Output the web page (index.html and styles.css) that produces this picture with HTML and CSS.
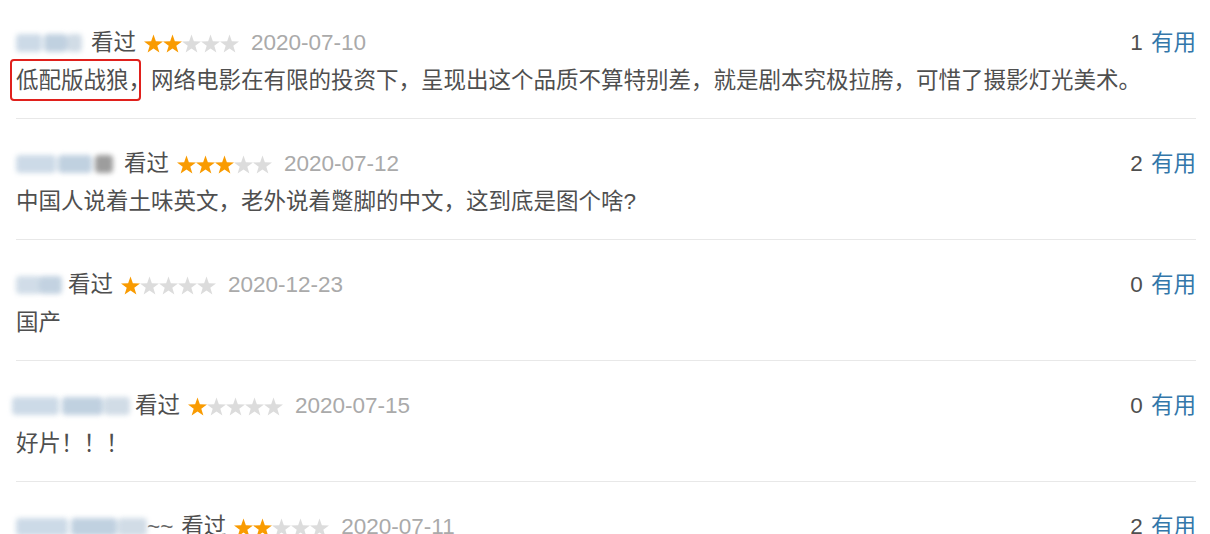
FILE: index.html
```html
<!DOCTYPE html>
<html lang="zh">
<head>
<meta charset="utf-8">
<title>短评</title>
<link rel="stylesheet" href="styles.css">
</head>
<body>
<svg width="0" height="0" class="defs">
  <defs>
    <polygon id="star" points="9.5,0.5 11.85,7.26 19,7.41 13.3,11.74 15.38,18.59 9.5,14.5 3.62,18.59 5.7,11.74 0,7.41 7.15,7.26"/>
  </defs>
</svg>
<div class="list">
  <div class="item">
    <div class="head">
      <span class="name w66"><i class="b1"></i><i class="b2"></i><i class="b3"></i></span>
      <span class="seen">看过</span>
      <svg class="stars" viewBox="0 0 95 19" width="95" height="19"><use href="#star" x="0" class="on"/><use href="#star" x="19" class="on"/><use href="#star" x="38"/><use href="#star" x="57"/><use href="#star" x="76"/></svg>
      <span class="date">2020-07-10</span>
      <span class="votes">1 <a class="useful">有用</a></span>
    </div>
    <p class="text"><span class="mark">低配版战狼，</span>网络电影在有限的投资下，呈现出这个品质不算特别差，就是剧本究极拉胯，可惜了摄影灯光美术。</p>
  </div>
  <div class="item">
    <div class="head">
      <span class="name w99"><i class="b1"></i><i class="b2"></i><i class="b4"></i></span>
      <span class="seen">看过</span>
      <svg class="stars" viewBox="0 0 95 19" width="95" height="19"><use href="#star" x="0" class="on"/><use href="#star" x="19" class="on"/><use href="#star" x="38" class="on"/><use href="#star" x="57"/><use href="#star" x="76"/></svg>
      <span class="date">2020-07-12</span>
      <span class="votes">2 <a class="useful">有用</a></span>
    </div>
    <p class="text">中国人说着土味英文，老外说着蹩脚的中文，这到底是图个啥?</p>
  </div>
  <div class="item">
    <div class="head">
      <span class="name w46"><i class="c1"></i><i class="c2"></i></span>
      <span class="seen">看过</span>
      <svg class="stars" viewBox="0 0 95 19" width="95" height="19"><use href="#star" x="0" class="on"/><use href="#star" x="19"/><use href="#star" x="38"/><use href="#star" x="57"/><use href="#star" x="76"/></svg>
      <span class="date">2020-12-23</span>
      <span class="votes">0 <a class="useful">有用</a></span>
    </div>
    <p class="text">国产</p>
  </div>
  <div class="item">
    <div class="head">
      <span class="name w118"><i class="b1"></i><i class="b2"></i><i class="b3"></i></span>
      <span class="seen tight">看过</span>
      <svg class="stars" viewBox="0 0 95 19" width="95" height="19"><use href="#star" x="0" class="on"/><use href="#star" x="19"/><use href="#star" x="38"/><use href="#star" x="57"/><use href="#star" x="76"/></svg>
      <span class="date">2020-07-15</span>
      <span class="votes">0 <a class="useful">有用</a></span>
    </div>
    <p class="text">好片！！！</p>
  </div>
  <div class="item">
    <div class="head">
      <span class="name w131"><i class="b1"></i><i class="b2"></i><i class="b3"></i></span><span class="tilde">~~</span>
      <span class="seen">看过</span>
      <svg class="stars" viewBox="0 0 95 19" width="95" height="19"><use href="#star" x="0" class="on"/><use href="#star" x="19" class="on"/><use href="#star" x="38"/><use href="#star" x="57"/><use href="#star" x="76"/></svg>
      <span class="date">2020-07-11</span>
      <span class="votes">2 <a class="useful">有用</a></span>
    </div>
    <p class="text">&nbsp;</p>
  </div>
</div>
</body>
</html>
```
FILE: styles.css
```css
html, body {
  margin: 0;
  padding: 0;
  background: #fff;
}
body {
  font-family: "Liberation Sans", "Noto Sans CJK SC", sans-serif;
  font-size: 22.5px;
  color: #4f4f4f;
  overflow: hidden;
}
.defs {
  position: absolute;
}
.list {
  padding: 0 14px 0 16px;
}
.item {
  padding: 27px 0 19px;
  border-bottom: 1px solid #e8e8e8;
}
.item:first-child {
  padding-top: 25px;
}
.head {
  display: flex;
  align-items: center;
  height: 36px;
  line-height: 36px;
}
.name {
  position: relative;
  display: inline-block;
  height: 22px;
  margin-right: 9px;
  filter: blur(2.5px);
  opacity: 0.85;
}
.name i {
  position: absolute;
  top: 2px;
  height: 18px;
  border-radius: 4px;
}
.name .b1 { left: 0; width: 40%; background: #c4d4e3; }
.name .b2 { left: 42%; width: 35%; background: #b6c9db; }
.name .b3 { left: 78%; width: 22%; background: #c9d6e2; }
.name .b4 { left: 80%; width: 18%; background: #8c8c8c; }
.name .c1 { left: 0; width: 55%; background: #c9d7e4; }
.name .c2 { left: 50%; width: 50%; background: #b9cbdc; }
.w66 { width: 66px; }
.w99 { width: 99px; }
.w46 { width: 46px; margin-right: 6px; }
.w118 { width: 118px; margin-left: -4px; }
.w131 { width: 131px; margin-right: 0; }
.tilde {
  margin-right: 8px;
  color: #666;
}
.seen {
  margin-right: 8px;
}
.seen.tight {
  margin-left: -4px;
}
.stars {
  fill: #dcdcdc;
  margin-right: 12px;
}
.stars .on {
  fill: #f99b01;
}
.date {
  color: #aaa;
}
.votes {
  margin-left: auto;
  color: #4f4f4f;
}
.useful {
  color: #3377aa;
  margin-left: 2px;
}
.text {
  margin: 2px 0 0;
  height: 36px;
  line-height: 36px;
  white-space: nowrap;
}
.mark {
  position: relative;
}
.mark::after {
  content: "";
  position: absolute;
  left: -6px;
  top: -9px;
  width: 127px;
  height: 38px;
  border: 2.5px solid #e0201c;
  border-radius: 4px;
}
```
